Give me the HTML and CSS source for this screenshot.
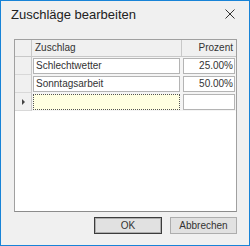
FILE: index.html
```html
<!DOCTYPE html>
<html lang="de">
<head>
<meta charset="utf-8">
<title>Zuschläge bearbeiten</title>
<link rel="stylesheet" href="styles.css">
</head>
<body>
<div class="window">
  <div class="titlebar">
    <span class="title">Zuschläge bearbeiten</span>
    <svg class="close" width="10" height="10" viewBox="0 0 10 10"><path d="M0.5 0.5 L9.5 9.5 M9.5 0.5 L0.5 9.5" stroke="#333" stroke-width="1" fill="none"/></svg>
  </div>
  <div class="content">
    <div class="grid">
      <div class="row header">
        <div class="rh"></div>
        <div class="hc c1">Zuschlag</div>
        <div class="hc c2">Prozent</div>
      </div>
      <div class="row">
        <div class="rh"></div>
        <div class="cell c1"><div class="box">Schlechtwetter</div></div>
        <div class="cell c2"><div class="box num">25.00%</div></div>
      </div>
      <div class="row">
        <div class="rh"></div>
        <div class="cell c1"><div class="box">Sonntagsarbeit</div></div>
        <div class="cell c2"><div class="box num">50.00%</div></div>
      </div>
      <div class="row">
        <div class="rh current"><span class="arrow"></span></div>
        <div class="cell c1"><div class="box newrow"></div></div>
        <div class="cell c2"><div class="box num"></div></div>
      </div>
    </div>
    <div class="buttons">
      <div class="btn default">OK</div>
      <div class="btn">Abbrechen</div>
    </div>
  </div>
</div>
</body>
</html>
```

FILE: styles.css
```css
html, body {
  margin: 0;
  padding: 0;
  background: #f0f0f0;
}
.window {
  width: 250px;
  height: 246px;
  box-sizing: border-box;
  border: 1px solid #1883d7;
  background: #f0f0f0;
  font-family: "Liberation Sans", Arial, sans-serif;
  color: #000;
  display: flex;
  flex-direction: column;
}
.titlebar {
  height: 29px;
  box-sizing: border-box;
  padding: 6px 14px 0 10px;
  background: #f0f0f0;
  display: flex;
  justify-content: space-between;
  align-items: flex-start;
}
.title {
  font-size: 13px;
  line-height: 16px;
  color: #222;
}
.close {
  margin-top: 2px;
  display: block;
}
.content {
  flex: 1;
  padding: 9px 12px 0 13px;
  display: flex;
  flex-direction: column;
}
.grid {
  height: 173px;
  box-sizing: border-box;
  border: 1px solid #a0a0a0;
  border-bottom-color: #8c8c8c;
  background: #ffffff;
  font-size: 10px;
}
.row {
  display: grid;
  grid-template-columns: 17px 150px 1fr;
  height: 18px;
}
.row.header {
  height: 17px;
  background: #f0f0f0;
  border-bottom: 1px solid #c8c8c8;
  box-sizing: border-box;
}
.rh {
  background: #f0f0f0;
  border-right: 1px solid #c8c8c8;
  border-bottom: 1px solid #d8d8d8;
  position: relative;
}
.header .rh {
  border-bottom: none;
}
.hc {
  line-height: 16px;
  padding: 0 3px;
  color: #333;
}
.hc.c1 {
  border-right: 1px solid #c8c8c8;
}
.hc.c2 {
  text-align: right;
  padding-right: 3px;
}
.cell {
  padding: 1px 1px 1px 1px;
  background: #f4f4f4;
}
.cell.c1 {
  padding-right: 2px;
}
.box {
  height: 16px;
  box-sizing: border-box;
  border: 1px solid #b4b4b4;
  background: #fff;
  line-height: 14px;
  padding: 0 2px;
  color: #333;
  white-space: nowrap;
}
.box.num {
  text-align: right;
  padding-right: 1px;
}
.box.newrow {
  background: #ffffe1;
  border: 1px dotted #555;
}
.arrow {
  position: absolute;
  left: 7px;
  top: 6px;
  width: 0;
  height: 0;
  border-left: 3px solid #444;
  border-top: 3px solid transparent;
  border-bottom: 3px solid transparent;
}
.buttons {
  display: flex;
  justify-content: flex-end;
  gap: 8px;
  margin-top: 5px;
}
.btn {
  width: 67px;
  height: 17px;
  box-sizing: border-box;
  border: 1px solid #adadad;
  background: #e1e1e1;
  font-size: 10px;
  line-height: 15px;
  text-align: center;
  color: #333;
}
.btn.default {
  width: 68px;
  border: 1px solid #3c3c3c;
  box-shadow: inset 0 0 0 1px #adadad;
}
```
